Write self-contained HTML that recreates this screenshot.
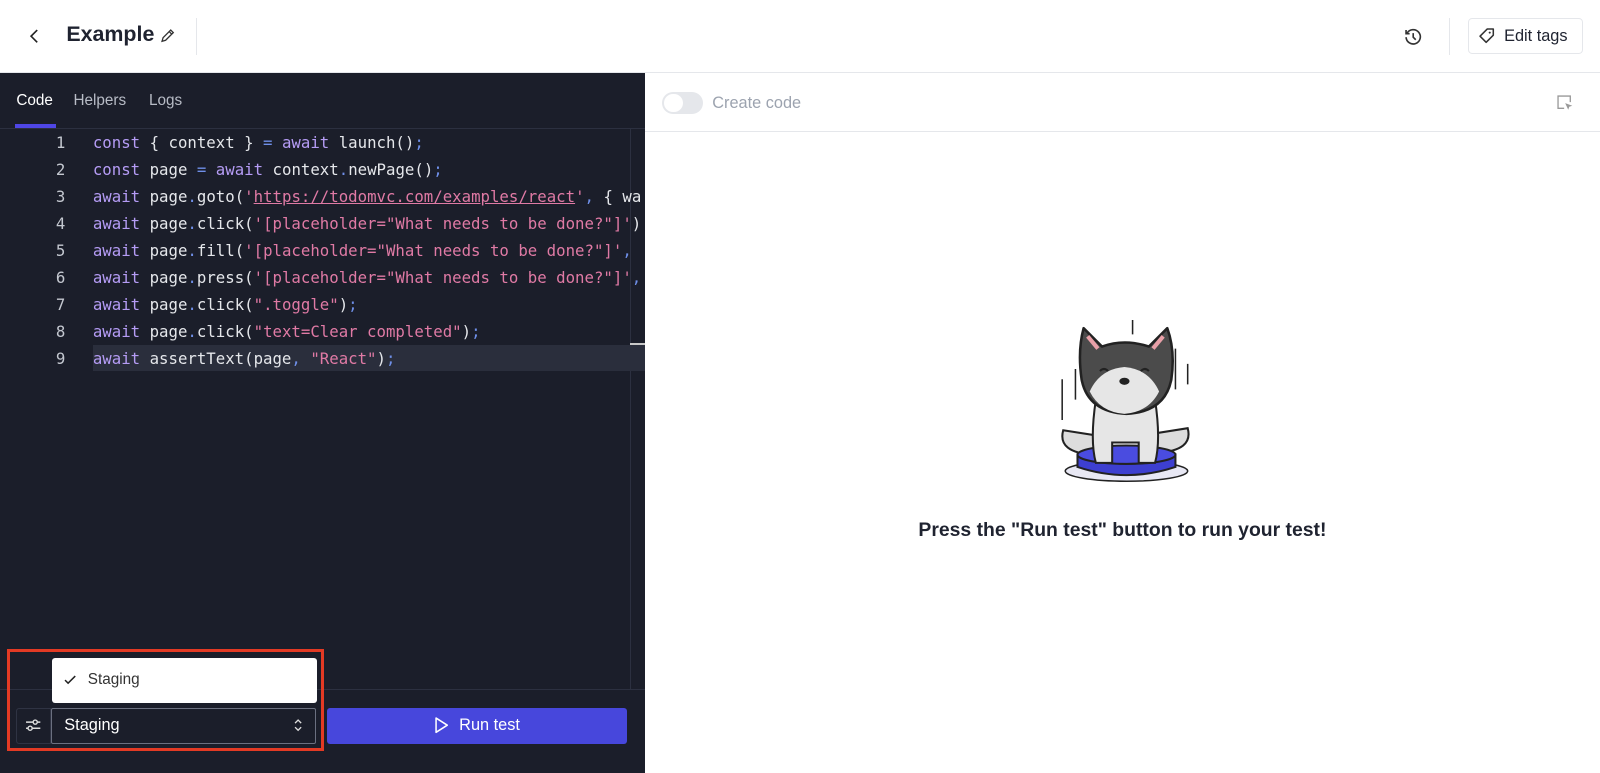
<!DOCTYPE html>
<html><head><meta charset="utf-8"><style>
*{box-sizing:border-box;margin:0;padding:0}
html,body{width:1600px;height:758px;overflow:hidden;background:#fff}
#w{position:absolute;left:0;top:0;width:1568px;height:743px;zoom:1.0204;font-family:"Liberation Sans",sans-serif}
.top{position:absolute;left:0;top:0;width:1568px;height:72px;border-bottom:1px solid #e5e7eb;background:#fff}
.left{position:absolute;left:0;top:72px;width:632px;height:686px;background:#1b1e2a}
.right{position:absolute;left:632px;top:72px;width:936px;height:686px;background:#fff}
.code{position:absolute;left:0;top:126px;font-family:"DejaVu Sans Mono","Liberation Mono",monospace;font-size:15.4px;color:#e5e7eb}
.ln{position:absolute;height:26.5px;line-height:26.5px;white-space:pre}
.n{position:absolute;left:40px;width:24px;text-align:right;color:#c4c8d0}
.k{color:#b59cf5}.s{color:#e07aa5}.p{color:#6f8fe8}
</style></head><body><div id="w">
<div class="top">
 <svg style="position:absolute;left:26px;top:27px" width="14" height="16" viewBox="0 0 14 16"><path d="M10 2L4 8l6 6" fill="none" stroke="#222" stroke-width="1.6"/></svg>
 <div style="position:absolute;left:65px;top:22px;font-size:21px;font-weight:bold;color:#1f2330">Example</div>
 <svg style="position:absolute;left:156px;top:27px" width="16" height="16" viewBox="0 0 16 16"><path d="M3 13l1-3.5 7.5-7.5 2.5 2.5L6.5 12z M10 3.5l2.5 2.5" fill="none" stroke="#333" stroke-width="1.3"/></svg>
 <div style="position:absolute;left:192px;top:18px;width:1px;height:36px;background:#e5e7eb"></div>
 <svg style="position:absolute;left:1375px;top:26px" width="20" height="20" viewBox="0 0 20 20"><path d="M4 6A7 7 0 1 1 3 10M3 3v3.5h3.5M10 6v4l2.5 2.5" fill="none" stroke="#333" stroke-width="1.6"/></svg>
 <div style="position:absolute;left:1420px;top:18px;width:1px;height:36px;background:#e5e7eb"></div>
 <div style="position:absolute;left:1439px;top:18px;width:112px;height:35px;border:1px solid #e5e7eb;border-radius:4px"></div>
 <svg style="position:absolute;left:1448px;top:26px" width="18" height="18" viewBox="0 0 18 18"><path d="M2 9l7-7h6v6l-7 7z" fill="none" stroke="#333" stroke-width="1.5" stroke-linejoin="round"/><circle cx="11.5" cy="5.5" r="1" fill="#333"/></svg>
 <div style="position:absolute;left:1474px;top:26px;font-size:16px;color:#1f2330">Edit tags</div>
</div>
<div class="left">
 <div style="position:absolute;left:16px;top:18px;font-size:15px;color:#fff">Code</div>
 <div style="position:absolute;left:72px;top:18px;font-size:15px;color:#b8bcc6">Helpers</div>
 <div style="position:absolute;left:146px;top:18px;font-size:15px;color:#b8bcc6">Logs</div>
 <div style="position:absolute;left:15px;top:50px;width:40px;height:3px;background:#4f46e5"></div>
 <div style="position:absolute;left:0;top:53px;width:632px;height:1px;background:#2c3040"></div>
 <div style="position:absolute;left:617px;top:54px;width:1px;height:550px;background:#2c3040"></div>
 <div style="position:absolute;left:0;top:603px;width:632px;height:1px;background:#2c3040"></div>
 <div style="position:absolute;left:91px;top:266px;width:541px;height:26px;background:#2a2e3c"></div>
 <div style="position:absolute;left:617px;top:264px;width:15px;height:2px;background:#c8c8c8"></div>
</div>
<div class="code">
<div class="n" style="top:0;line-height:26.5px">1</div><div class="ln" style="left:91px;top:0"><span class="k">const</span> { context } <span class="p">=</span> <span class="k">await</span> launch()<span class="p">;</span></div>
<div class="n" style="top:26.5px;line-height:26.5px">2</div><div class="ln" style="left:91px;top:26.5px"><span class="k">const</span> page <span class="p">=</span> <span class="k">await</span> context<span class="p">.</span>newPage()<span class="p">;</span></div>
<div class="n" style="top:53px;line-height:26.5px">3</div><div class="ln" style="left:91px;top:53px"><span class="k">await</span> page<span class="p">.</span>goto(<span class="s">'<u>https://todomvc.com/examples/react</u>'</span><span class="p">,</span> { wa</div>
<div class="n" style="top:79.5px;line-height:26.5px">4</div><div class="ln" style="left:91px;top:79.5px"><span class="k">await</span> page<span class="p">.</span>click(<span class="s">'[placeholder="What needs to be done?"]'</span>)</div>
<div class="n" style="top:106px;line-height:26.5px">5</div><div class="ln" style="left:91px;top:106px"><span class="k">await</span> page<span class="p">.</span>fill(<span class="s">'[placeholder="What needs to be done?"]'</span><span class="p">,</span></div>
<div class="n" style="top:132.5px;line-height:26.5px">6</div><div class="ln" style="left:91px;top:132.5px"><span class="k">await</span> page<span class="p">.</span>press(<span class="s">'[placeholder="What needs to be done?"]'</span><span class="p">,</span></div>
<div class="n" style="top:159px;line-height:26.5px">7</div><div class="ln" style="left:91px;top:159px"><span class="k">await</span> page<span class="p">.</span>click(<span class="s">".toggle"</span>)<span class="p">;</span></div>
<div class="n" style="top:185.5px;line-height:26.5px">8</div><div class="ln" style="left:91px;top:185.5px"><span class="k">await</span> page<span class="p">.</span>click(<span class="s">"text=Clear completed"</span>)<span class="p">;</span></div>
<div class="n" style="top:212px;line-height:26.5px">9</div><div class="ln" style="left:91px;top:212px"><span class="k">await</span> assertText(page<span class="p">,</span> <span class="s">"React"</span>)<span class="p">;</span></div>
</div>
<div style="position:absolute;left:16px;top:694px;width:34px;height:35px;border:1px solid #2f3343;border-radius:3px 0 0 3px"></div>
<svg style="position:absolute;left:24px;top:702px" width="18" height="18" viewBox="0 0 18 18"><path d="M2 6h14M2 12h14" stroke="#ddd" stroke-width="1.4"/><circle cx="11" cy="6" r="2" fill="#1b1e2a" stroke="#ddd" stroke-width="1.4"/><circle cx="6" cy="12" r="2" fill="#1b1e2a" stroke="#ddd" stroke-width="1.4"/></svg>
<div style="position:absolute;left:50px;top:694px;width:260px;height:35px;border:1px solid #6b7080;border-radius:2px;background:#1b1e2a"></div>
<div style="position:absolute;left:63px;top:702px;font-size:16px;color:#fff">Staging</div>
<svg style="position:absolute;left:286px;top:702px" width="12" height="18" viewBox="0 0 12 18"><path d="M3 7l3-3 3 3M3 11l3 3 3-3" fill="none" stroke="#ddd" stroke-width="1.3"/></svg>
<div style="position:absolute;left:51px;top:645px;width:260px;height:44px;background:#fff;border-radius:3px"></div>
<svg style="position:absolute;left:62px;top:660px" width="14" height="14" viewBox="0 0 14 14"><path d="M2 7l3 3 7-7" fill="none" stroke="#222" stroke-width="1.5"/></svg>
<div style="position:absolute;left:86px;top:658px;font-size:15px;color:#333">Staging</div>
<div style="position:absolute;left:7px;top:636px;width:311px;height:100px;border:3px solid #e33a24"></div>
<div style="position:absolute;left:320px;top:694px;width:294px;height:35px;background:#4747dc;border-radius:3px"></div>
<svg style="position:absolute;left:424px;top:702px" width="16" height="18" viewBox="0 0 16 18"><path d="M3 2l11 7-11 7z" fill="none" stroke="#fff" stroke-width="1.5" stroke-linejoin="round"/></svg>
<div style="position:absolute;left:450px;top:702px;font-size:16px;color:#fff">Run test</div>
<div class="right">
 <div style="position:absolute;left:17px;top:18px;width:40px;height:22px;border-radius:11px;background:#e5e7eb"></div>
 <div style="position:absolute;left:19px;top:20px;width:18px;height:18px;border-radius:9px;background:#fff"></div>
 <div style="position:absolute;left:66px;top:20px;font-size:16px;color:#9ca3af">Create code</div>
 <svg style="position:absolute;left:893px;top:20px" width="18" height="18" viewBox="0 0 18 18"><path d="M8 14H2V2h12v6" fill="none" stroke="#999" stroke-width="1.3"/><path d="M9 9l7 2.5-3 1-1 3z" fill="#999"/></svg>
 <div style="position:absolute;left:0;top:56px;width:936px;height:1px;background:#e5e7eb"></div>
 <svg style="position:absolute;left:400px;top:240px" width="140" height="170" viewBox="0 0 140 170">
  <g stroke="#222" stroke-width="1.5"><path d="M22 50v30M120 30v40M132 45v20M78 2v14M9 60v40"/></g>
  <ellipse cx="72" cy="150" rx="60" ry="10" fill="#e8e8f4" stroke="#222" stroke-width="1.5"/>
  <path d="M10 110q-6 22 30 24l8-18zM132 108q6 22-30 24l-8-18z" fill="#ddd" stroke="#222" stroke-width="2"/>
  <path d="M24 134q48 18 96 0v12q-48 16-96 0z" fill="#3d3fd0" stroke="#222" stroke-width="2"/>
  <ellipse cx="72" cy="134" rx="48" ry="9" fill="#4a4ce0" stroke="#222" stroke-width="2"/>
  <path d="M42 80q-6 40 0 62h16v-20h26v20h16q6-22 0-62z" fill="#e6e6e6" stroke="#222" stroke-width="2"/>
  <path d="M30 10l18 18q22-8 46 0l18-18q8 22 4 50q-6 32-44 34q-38-2-44-34q-4-28 2-50z" fill="#4b4b4b" stroke="#222" stroke-width="2.5" stroke-linejoin="round"/>
  <path d="M34 18l10 12M108 18l-10 12" stroke="#e8a0a8" stroke-width="4"/>
  <path d="M36 72q10-22 34-24q24 2 34 24q-10 20-34 22q-24-2-34-22z" fill="#e6e6e6"/>
  <path d="M46 52q4-4 8 0M86 52q4-4 8 0" fill="none" stroke="#222" stroke-width="2"/>
  <ellipse cx="70" cy="62" rx="5" ry="3.5" fill="#222"/>
 </svg>
 <div style="position:absolute;left:0;width:936px;top:437px;text-align:center;font-size:19px;font-weight:bold;color:#1f2330">Press the "Run test" button to run your test!</div>
</div>
</div></body></html>
